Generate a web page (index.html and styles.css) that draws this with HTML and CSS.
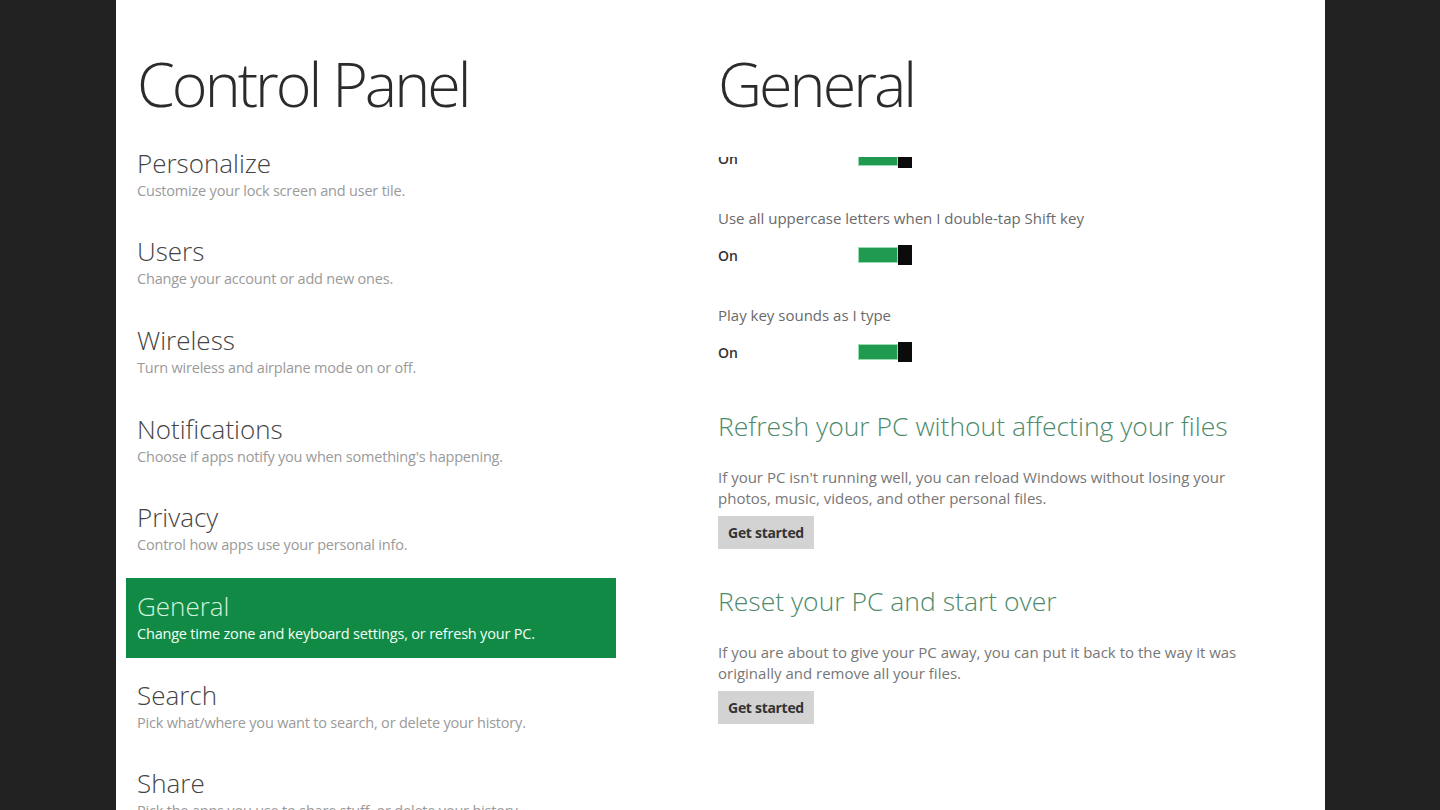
FILE: index.html
```html
<!DOCTYPE html>
<html lang="en">
<head>
<meta charset="utf-8">
<title>Control Panel</title>
<link rel="stylesheet" href="styles.css">
</head>
<body>
<div class="frame">
  <div class="page">
    <section class="nav">
      <h1 class="title">Control Panel</h1>
      <ul class="items">
        <li class="item"><div class="item-name">Personalize</div><div class="item-desc">Customize your lock screen and user tile.</div></li>
        <li class="item"><div class="item-name">Users</div><div class="item-desc">Change your account or add new ones.</div></li>
        <li class="item"><div class="item-name">Wireless</div><div class="item-desc">Turn wireless and airplane mode on or off.</div></li>
        <li class="item"><div class="item-name">Notifications</div><div class="item-desc">Choose if apps notify you when something's happening.</div></li>
        <li class="item"><div class="item-name">Privacy</div><div class="item-desc">Control how apps use your personal info.</div></li>
        <li class="item selected"><div class="item-name">General</div><div class="item-desc">Change time zone and keyboard settings, or refresh your PC.</div></li>
        <li class="item"><div class="item-name">Search</div><div class="item-desc">Pick what/where you want to search, or delete your history.</div></li>
        <li class="item"><div class="item-name">Share</div><div class="item-desc">Pick the apps you use to share stuff, or delete your history.</div></li>
      </ul>
    </section>
    <section class="detail">
      <h1 class="title">General</h1>
      <div class="scroll">
        <div class="scroll-content">
          <div class="toggle-row"><span class="state">On</span><span class="toggle"><span class="track"></span><span class="thumb"></span></span></div>
          <div class="setting">
            <div class="label">Use all uppercase letters when I double-tap Shift key</div>
            <div class="toggle-row"><span class="state">On</span><span class="toggle"><span class="track"></span><span class="thumb"></span></span></div>
          </div>
          <div class="setting">
            <div class="label">Play key sounds as I type</div>
            <div class="toggle-row"><span class="state">On</span><span class="toggle"><span class="track"></span><span class="thumb"></span></span></div>
          </div>
          <div class="block">
            <h2 class="heading">Refresh your PC without affecting your files</h2>
            <p class="para">If your PC isn't running well, you can reload Windows without losing your photos, music, videos, and other personal files.</p>
            <button class="btn">Get started</button>
          </div>
          <div class="block">
            <h2 class="heading">Reset your PC and start over</h2>
            <p class="para">If you are about to give your PC away, you can put it back to the way it was originally and remove all your files.</p>
            <button class="btn">Get started</button>
          </div>
        </div>
      </div>
    </section>
  </div>
</div>
</body>
</html>
```

FILE: styles.css
```css
html, body {
  margin: 0;
  padding: 0;
  background: #222222;
  height: 810px;
  overflow: hidden;
}

.frame {
  display: flex;
  height: 810px;
}

.page {
  margin-left: 116px;
  width: 1209px;
  height: 810px;
  background: #ffffff;
  display: flex;
  overflow: hidden;
  font-family: "Open Sans", "Noto Sans", sans-serif;
}

.nav {
  width: 592px;
  padding-left: 10px;
  flex: none;
}

.title {
  margin: 46px 0 0 0;
  font-size: 61px;
  line-height: 76px;
  font-weight: 300;
  color: #2b2b2b;
  letter-spacing: -3px;
  white-space: nowrap;
}

.nav .title {
  padding-left: 11px;
}

.items {
  list-style: none;
  margin: 12.5px 0 0 0;
  padding: 0;
  width: 490px;
  display: flex;
  flex-direction: column;
  gap: 8.7px;
}

.item {
  height: 80px;
  box-sizing: border-box;
  padding: 13px 0 0 11px;
}

.item-name {
  font-size: 26px;
  line-height: 30px;
  font-weight: 300;
  color: #444444;
}

.item-desc {
  margin-top: 4px;
  font-size: 14.5px;
  line-height: 18px;
  color: #9a9a9a;
  letter-spacing: -0.2px;
  white-space: nowrap;
}

.item.selected {
  background: #118a45;
}

.item.selected .item-name {
  color: #d4f3dc;
}

.item.selected .item-desc {
  color: #f2fff6;
}

.detail {
  flex: 1;
}

.scroll {
  margin-top: 35px;
  height: 700px;
  overflow: hidden;
}

.scroll-content {
  margin-top: -9px;
}

.toggle-row {
  display: flex;
  align-items: center;
  height: 20px;
}

.state {
  width: 140px;
  font-size: 14px;
  color: #333333;
  font-weight: 600;
}

.toggle {
  display: flex;
  align-items: center;
  width: 54px;
  height: 20px;
}

.track {
  width: 40px;
  height: 16px;
  background: #1f9a50;
  border: 1px solid #9adbb1;
  box-sizing: border-box;
}

.thumb {
  width: 14px;
  height: 20px;
  background: #0b0b0b;
}

.setting {
  margin-top: 40px;
}

.label {
  font-size: 15px;
  line-height: 20px;
  color: #6a6a6a;
  margin-bottom: 17px;
}

.block {
  margin-top: 48px;
}

.block + .block {
  margin-top: 36px;
}

.heading {
  margin: 0;
  font-size: 26.5px;
  line-height: 32px;
  font-weight: 300;
  color: #4d8a6c;
}

.para {
  margin: 24.5px 0 0 0;
  width: 535px;
  font-size: 15px;
  line-height: 21px;
  color: #777777;
}

.btn {
  display: block;
  margin-top: 7.5px;
  width: 96px;
  height: 33px;
  border: none;
  background: #d3d3d3;
  font-family: "Open Sans", "Noto Sans", sans-serif;
  font-size: 14px;
  font-weight: 700;
  color: #333333;
  padding: 0;
  letter-spacing: -0.3px;
}
```
